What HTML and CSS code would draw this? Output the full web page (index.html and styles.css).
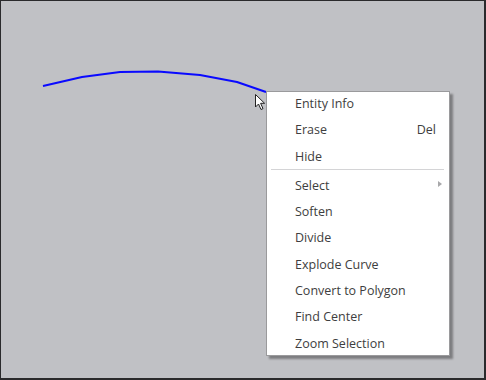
FILE: index.html
```html
<!DOCTYPE html>
<html>
<head>
<meta charset="utf-8">
<link rel="stylesheet" href="styles.css">
</head>
<body>
<div class="canvas">
  <svg class="curve" width="486" height="380" viewBox="0 0 486 380">
    <polyline points="43,86 82,77 120,72 158,71.5 200,75 237,82 266,92" fill="none" stroke="#0a0aff" stroke-width="2" stroke-linejoin="round"/>
  </svg>
  <svg class="cursor" width="12" height="18" viewBox="0 0 12 18">
    <path d="M0.5,0.5 L0.5,13 L3.5,10 L6,15.5 L8,14.6 L5.6,9.3 L9.6,9.3 Z" fill="#fff" stroke="#222" stroke-width="1" stroke-linejoin="round"/>
  </svg>
  <div class="menu">
    <div class="item">Entity Info</div>
    <div class="item"><span>Erase</span><span class="key">Del</span></div>
    <div class="item">Hide</div>
    <div class="sep"></div>
    <div class="item"><span>Select</span><span class="arrow"></span></div>
    <div class="item">Soften</div>
    <div class="item">Divide</div>
    <div class="item">Explode Curve</div>
    <div class="item">Convert to Polygon</div>
    <div class="item">Find Center</div>
    <div class="item">Zoom Selection</div>
  </div>
</div>
</body>
</html>
```
FILE: styles.css
```css
html, body {
  margin: 0;
  padding: 0;
}
body {
  width: 486px;
  height: 380px;
  overflow: hidden;
  font-family: "Open Sans", "Noto Sans", sans-serif;
}
.canvas {
  position: relative;
  box-sizing: border-box;
  width: 486px;
  height: 380px;
  background: #c0c1c5;
  border-style: solid;
  border-color: #2a2a2c;
  border-width: 1px 2px 2px 1px;
}
.curve {
  position: absolute;
  left: -1px;
  top: -1px;
}
.cursor {
  position: absolute;
  left: 254px;
  top: 93px;
}
.menu {
  position: absolute;
  left: 265px;
  top: 90px;
  width: 182px;
  background: #fff;
  border: 1px solid #9a9a9c;
  box-shadow: 3px 3px 2px rgba(0, 0, 0, 0.35);
  display: flex;
  flex-direction: column;
}
.item {
  display: flex;
  justify-content: space-between;
  align-items: center;
  height: 22px;
  line-height: 22px;
  padding: 1px 13px 3.3px 28px;
  font-size: 12.5px;
  color: #3e3e40;
  white-space: nowrap;
}
.item:last-child {
  padding-bottom: 0;
}
.sep {
  height: 1px;
  background: #d4d4d6;
  margin: -2px 5px 4px 4px;
}
.arrow {
  width: 0;
  height: 0;
  border-left: 4px solid #a8a8aa;
  border-top: 3px solid transparent;
  border-bottom: 3px solid transparent;
  margin-right: -6px;
  margin-top: -3px;
}
```
